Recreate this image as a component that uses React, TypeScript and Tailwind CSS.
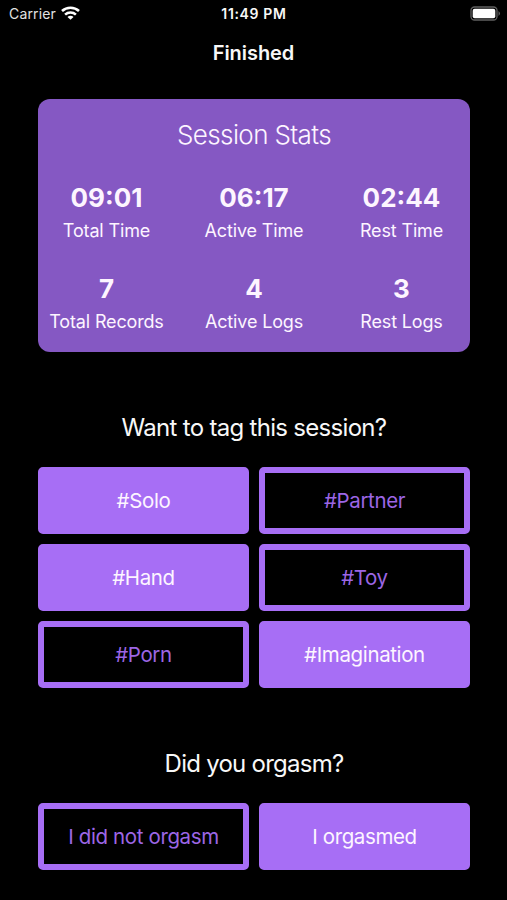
import React from "react";

const stats = [
  ["09:01", "Total Time"],
  ["06:17", "Active Time"],
  ["02:44", "Rest Time"],
  ["7", "Total Records"],
  ["4", "Active Logs"],
  ["3", "Rest Logs"],
];

function Choice({ label, selected }: { label: string; selected?: boolean }) {
  return (
    <button
      className={
        "flex h-[67px] items-center justify-center rounded-[5px] border-[6px] border-[#a76ef5] pt-[2px] text-[20.5px] tracking-[-0.37px] " +
        (selected ? "bg-[#a76ef5] text-[#fdf5ff]" : "bg-black text-[#9c66e5]")
      }
    >
      {label}
    </button>
  );
}

export default function App() {
  return (
    <div className="h-[900px] w-full overflow-hidden bg-black font-['Inter',sans-serif] text-[#f8f8f8]">
      <header className="grid h-[27px] grid-cols-3 items-center pr-[6px] pl-[9px] text-[14px]">
        <div className="flex items-center gap-[5px]">
          <span className="tracking-[0.15px] text-[#e2e2e2]">Carrier</span>
          <svg className="-mt-[2px]" width="19" height="14" viewBox="0 0 19 14" fill="none" stroke="white" strokeWidth="2.6">
            <path d="M1 5C5.7.6 13.3.6 18 5M4.1 8.6c3-2.8 7.8-2.8 10.8 0" />
            <path d="M9.5 13.8 6.5 10.9c1.5-1.5 4.5-1.5 6 0z" fill="white" stroke="none" />
          </svg>
        </div>
        <span className="pr-[2px] text-center text-[14px] font-semibold tracking-[0.65px] whitespace-nowrap">11:49 PM</span>
        <svg className="justify-self-end" width="31" height="15" viewBox="0 0 31 15">
          <rect x="1" y="1" width="26" height="13" rx="3.5" fill="none" stroke="#606060" strokeWidth="1.3" />
          <rect x="2.7" y="2.7" width="22.6" height="9.6" rx="2" fill="white" />
          <path d="M28.5 5q3 2.5 0 5z" fill="#606060" />
        </svg>
      </header>
      <h1 className="flex h-[50px] items-center justify-center pt-px text-[20px] font-semibold tracking-[-0.05px]">Finished</h1>
      <main className="pt-[22px] pr-[37px] pl-[38px]">
        <section className="h-[253px] rounded-[12px] bg-[#8558c3] pt-[19px] text-[#fdf5ff]">
          <h2 className="text-center text-[26px] leading-[34px] font-light tracking-[-0.62px]">Session Stats</h2>
          <div className="mt-[29px] grid grid-cols-[137px_158px_137px] gap-y-[33px] text-center">
            {stats.map(([value, label]) => (
              <div key={label} className="h-[58px]">
                <div className="text-[26px] leading-[34px] font-bold">{value}</div>
                <div className="text-[18px] leading-[32px] tracking-[-0.15px] whitespace-nowrap">{label}</div>
              </div>
            ))}
          </div>
        </section>
        <h2 className="mt-[60px] h-8 text-center text-[24px] leading-8 tracking-[-0.7px]">Want to tag this session?</h2>
        <div className="mt-[23px] grid grid-cols-2 gap-[10px]">
          <Choice label="#Solo" selected />
          <Choice label="#Partner" />
          <Choice label="#Hand" selected />
          <Choice label="#Toy" />
          <Choice label="#Porn" />
          <Choice label="#Imagination" selected />
        </div>
        <h2 className="mt-[60px] h-8 text-center text-[24px] leading-8 tracking-[-0.75px]">Did you orgasm?</h2>
        <div className="mt-[23px] grid grid-cols-2 gap-[10px]">
          <Choice label="I did not orgasm" />
          <Choice label="I orgasmed" selected />
        </div>
      </main>
    </div>
  );
}
